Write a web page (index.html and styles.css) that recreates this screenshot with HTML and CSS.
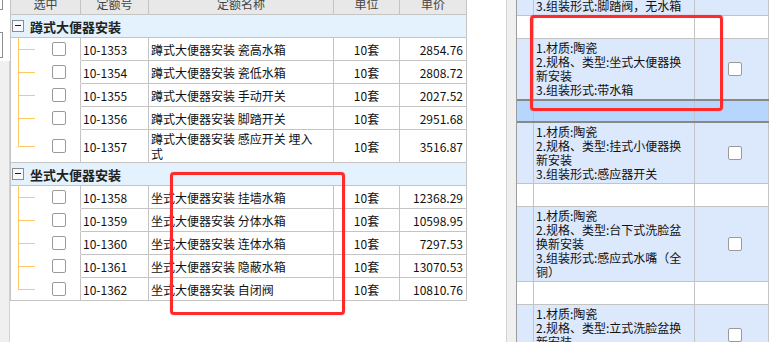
FILE: index.html
```html
<!DOCTYPE html>
<html lang="zh-CN">
<head>
    <meta charset="UTF-8">
    <meta name="viewport" content="width=device-width, initial-scale=1.0">
    <title>定额选择</title>
    <link rel="stylesheet" href="styles.css">
</head>
<body>
    <div class="screen">
        <!-- 左侧面板边缘 -->
        <div class="side">
            <div class="side-btn first"></div>
            <div class="side-btn second"></div>
            <div class="side-fill"></div>
        </div>

        <!-- 定额列表 -->
        <div class="quota">
            <div class="q-row q-head">
                <div class="q-cell">选中</div>
                <div class="q-cell">定额号</div>
                <div class="q-cell">定额名称</div>
                <div class="q-cell">单位</div>
                <div class="q-cell">单价</div>
            </div>

            <div class="q-group"><span class="fold"></span>蹲式大便器安装</div>
            <div class="q-row">
                <div class="q-cell tree"><span class="check"></span></div>
                <div class="q-cell code">10-1353</div>
                <div class="q-cell name">蹲式大便器安装 瓷高水箱</div>
                <div class="q-cell unit">10套</div>
                <div class="q-cell price">2854.76</div>
            </div>
            <div class="q-row">
                <div class="q-cell tree"><span class="check"></span></div>
                <div class="q-cell code">10-1354</div>
                <div class="q-cell name">蹲式大便器安装 瓷低水箱</div>
                <div class="q-cell unit">10套</div>
                <div class="q-cell price">2808.72</div>
            </div>
            <div class="q-row">
                <div class="q-cell tree"><span class="check"></span></div>
                <div class="q-cell code">10-1355</div>
                <div class="q-cell name">蹲式大便器安装 手动开关</div>
                <div class="q-cell unit">10套</div>
                <div class="q-cell price">2027.52</div>
            </div>
            <div class="q-row">
                <div class="q-cell tree"><span class="check"></span></div>
                <div class="q-cell code">10-1356</div>
                <div class="q-cell name">蹲式大便器安装 脚踏开关</div>
                <div class="q-cell unit">10套</div>
                <div class="q-cell price">2951.68</div>
            </div>
            <div class="q-row tall last">
                <div class="q-cell tree"><span class="check"></span></div>
                <div class="q-cell code">10-1357</div>
                <div class="q-cell name wrap">蹲式大便器安装 感应开关 埋入<br>式</div>
                <div class="q-cell unit">10套</div>
                <div class="q-cell price">3516.87</div>
            </div>

            <div class="q-group"><span class="fold"></span>坐式大便器安装</div>
            <div class="q-row">
                <div class="q-cell tree"><span class="check"></span></div>
                <div class="q-cell code">10-1358</div>
                <div class="q-cell name">坐式大便器安装 挂墙水箱</div>
                <div class="q-cell unit">10套</div>
                <div class="q-cell price">12368.29</div>
            </div>
            <div class="q-row">
                <div class="q-cell tree"><span class="check"></span></div>
                <div class="q-cell code">10-1359</div>
                <div class="q-cell name">坐式大便器安装 分体水箱</div>
                <div class="q-cell unit">10套</div>
                <div class="q-cell price">10598.95</div>
            </div>
            <div class="q-row">
                <div class="q-cell tree"><span class="check"></span></div>
                <div class="q-cell code">10-1360</div>
                <div class="q-cell name">坐式大便器安装 连体水箱</div>
                <div class="q-cell unit">10套</div>
                <div class="q-cell price">7297.53</div>
            </div>
            <div class="q-row">
                <div class="q-cell tree"><span class="check"></span></div>
                <div class="q-cell code">10-1361</div>
                <div class="q-cell name">坐式大便器安装 隐蔽水箱</div>
                <div class="q-cell unit">10套</div>
                <div class="q-cell price">13070.53</div>
            </div>
            <div class="q-row last">
                <div class="q-cell tree"><span class="check"></span></div>
                <div class="q-cell code">10-1362</div>
                <div class="q-cell name">坐式大便器安装 自闭阀</div>
                <div class="q-cell unit">10套</div>
                <div class="q-cell price">10810.76</div>
            </div>
        </div>

        <div class="gap"></div>

        <!-- 清单特征列表 -->
        <div class="r-side"></div>
        <div class="spec">
            <div class="s-row blue">
                <div class="s-cell"></div>
                <div class="s-cell text">1.材质:陶瓷<br>2.规格、类型:蹲式大便器换<br>新安装<br>3.组装形式:脚踏阀，无水箱</div>
                <div class="s-cell"><span class="check"></span></div>
            </div>
            <div class="s-row white">
                <div class="s-cell"></div><div class="s-cell"></div><div class="s-cell"></div>
            </div>
            <div class="s-row blue no-line">
                <div class="s-cell"></div>
                <div class="s-cell text">1.材质:陶瓷<br>2.规格、类型:坐式大便器换<br>新安装<br>3.组装形式:带水箱</div>
                <div class="s-cell"><span class="check"></span></div>
            </div>
            <div class="s-row selected">
                <div class="s-cell"></div><div class="s-cell"></div><div class="s-cell"></div>
            </div>
            <div class="s-row blue">
                <div class="s-cell"></div>
                <div class="s-cell text">1.材质:陶瓷<br>2.规格、类型:挂式小便器换<br>新安装<br>3.组装形式:感应器开关</div>
                <div class="s-cell"><span class="check"></span></div>
            </div>
            <div class="s-row white">
                <div class="s-cell"></div><div class="s-cell"></div><div class="s-cell"></div>
            </div>
            <div class="s-row blue">
                <div class="s-cell"></div>
                <div class="s-cell text">1.材质:陶瓷<br>2.规格、类型:台下式洗脸盆<br>换新安装<br>3.组装形式:感应式水嘴（全<br>铜）</div>
                <div class="s-cell"><span class="check"></span></div>
            </div>
            <div class="s-row white">
                <div class="s-cell"></div><div class="s-cell"></div><div class="s-cell"></div>
            </div>
            <div class="s-row blue">
                <div class="s-cell"></div>
                <div class="s-cell text">1.材质:陶瓷<br>2.规格、类型:立式洗脸盆换<br>新安装<br>3.组装形式:感应式水嘴</div>
                <div class="s-cell"><span class="check"></span></div>
            </div>
        </div>

        <!-- 标注框 -->
        <div class="mark mark-left"></div>
        <div class="mark mark-right"></div>
    </div>
</body>
</html>
```

FILE: styles.css
```css
body {
    margin: 0;
    padding: 0;
    background: #fff;
    font-family: "Noto Sans CJK SC", "Liberation Sans", sans-serif;
    font-size: 12px;
    color: #111;
    overflow: hidden;
}
.screen {
    position: relative;
    display: flex;
    align-items: flex-start;
    width: 769px;
    height: 342px;
    overflow: hidden;
}

/* left edge */
.side {
    width: 10px;
    height: 342px;
    display: flex;
    flex-direction: column;
    flex-shrink: 0;
}
.side-btn {
    width: 2px;
    border-right: 1px solid #8e8e8e;
    border-bottom: 1px solid #8e8e8e;
}
.side-btn.first {
    height: 9px;
}
.side-btn.second {
    height: 24px;
    margin-top: 22px;
    border-top: 1px solid #8e8e8e;
}
.side-fill {
    flex: 1;
    margin-top: 3px;
    background: #f0f0f0;
    border-right: 1px solid #d2d2d2;
}

/* quota table */
.quota {
    width: 456px;
    flex-shrink: 0;
    margin-top: -8px;
    border-left: 1px solid #c4c4c4;
}
.q-row {
    display: grid;
    grid-template-columns: 70px 68px 185px 66px 67px;
    height: 23px;
}
.q-row.tall {
    height: 33px;
}
.q-cell {
    box-sizing: border-box;
    display: flex;
    align-items: center;
    padding: 0 2px;
    border-right: 1px solid #c4c4c4;
    border-bottom: 1px solid #c4c4c4;
    white-space: nowrap;
    line-height: 15px;
}
.q-head .q-cell {
    justify-content: center;
    background: #e8e8e8;
    color: #444;
}
.q-cell.unit {
    justify-content: center;
}
.q-cell.price {
    justify-content: flex-end;
    padding-right: 3px;
}
.q-group {
    box-sizing: border-box;
    display: flex;
    align-items: center;
    height: 23px;
    padding-left: 1px;
    background: #e4f2fd;
    border-right: 1px solid #c4c4c4;
    border-bottom: 1px solid #c4c4c4;
    font-size: 13px;
    font-weight: bold;
    color: #222;
}
.fold {
    position: relative;
    box-sizing: border-box;
    width: 12px;
    height: 12px;
    margin-right: 6px;
    border: 1px solid #8c8c8c;
    background: #f6faff;
}
.fold::after {
    content: '';
    position: absolute;
    left: 2px;
    top: 4px;
    width: 6px;
    height: 1px;
    background: #222;
}

/* tree lines */
.tree {
    position: relative;
    padding-left: 41px;
    border-bottom-color: transparent;
}
.tree::before {
    content: '';
    position: absolute;
    left: 7px;
    top: 0;
    bottom: -1px;
    width: 1px;
    background: #ffc864;
}
.tree::after {
    content: '';
    position: absolute;
    left: 7px;
    top: 50%;
    width: 17px;
    height: 1px;
    background: #ffc864;
}
.last .tree {
    border-bottom-color: #c4c4c4;
}
.last .tree::before {
    bottom: 50%;
}

.check {
    display: inline-block;
    box-sizing: border-box;
    width: 14px;
    height: 14px;
    border: 1px solid #9a9a9a;
    border-radius: 2px;
    background: #fff;
}

.gap {
    width: 39px;
    flex-shrink: 0;
}
.r-side {
    width: 9px;
    height: 342px;
    flex-shrink: 0;
    background: #f0f0f0;
    border-left: 1px solid #d4d4d4;
}

/* spec table */
.spec {
    flex: 1;
    margin-top: -45px;
    border-left: 1px solid #9c9c9c;
}
.s-row {
    display: grid;
    grid-template-columns: 17px 161px 1fr;
}
.s-cell {
    box-sizing: border-box;
    display: flex;
    align-items: center;
    border-right: 1px solid #c4c4c4;
    border-bottom: 1px solid #c4c4c4;
}
.s-cell.text {
    display: block;
    padding: 2px 2px;
    line-height: 14px;
    white-space: nowrap;
}
.s-cell .check {
    margin-left: 33px;
}
.s-row.blue {
    background: #dce8fb;
}
.s-row.white {
    height: 23px;
    background: #fff;
}
.s-row.no-line .s-cell {
    border-bottom: none;
}
.s-row.selected {
    box-sizing: border-box;
    height: 24px;
    background: #b6d6fd;
    border-top: 2px solid #888;
    border-bottom: 2px solid #888;
}
.s-row.selected .s-cell {
    border-bottom: none;
}

/* red annotation boxes */
.mark {
    position: absolute;
    box-sizing: border-box;
    border: 3px solid #ff2b2b;
    border-radius: 4px;
    box-shadow: 0 0 1px rgba(255, 0, 0, 0.6);
}
.mark-left {
    left: 170px;
    top: 172px;
    width: 175px;
    height: 143px;
}
.mark-right {
    left: 530px;
    top: 15px;
    width: 193px;
    height: 96px;
}
```
